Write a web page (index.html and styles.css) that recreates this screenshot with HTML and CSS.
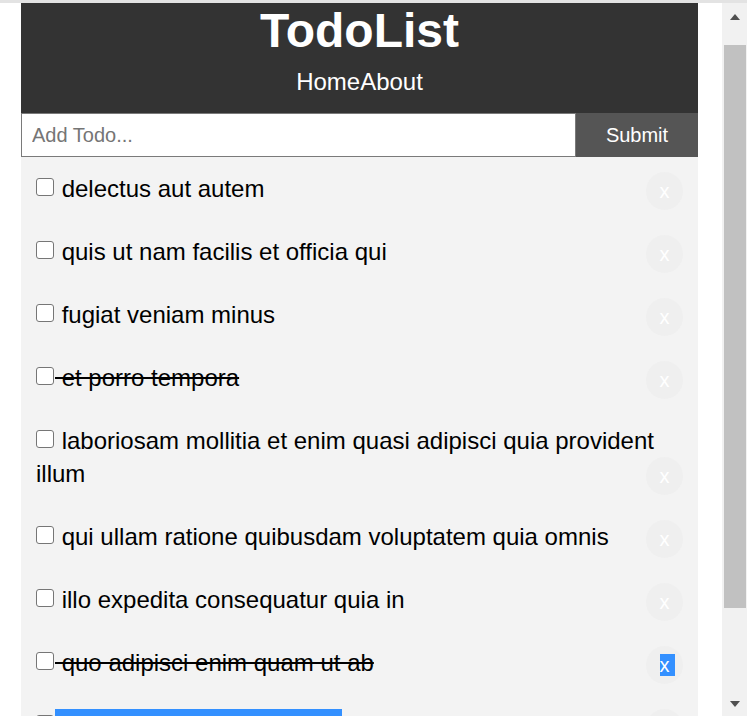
FILE: index.html
```html
<!DOCTYPE html>
<html lang="en">
<head>
<meta charset="utf-8">
<title>TodoList</title>
<link rel="stylesheet" href="styles.css">
</head>
<body>
<div class="topbar"></div>
<div class="window">
  <div class="page">
    <div class="container">
      <header class="header">
        <h1 class="title">TodoList</h1>
        <nav class="nav"><a href="#" class="nav-link">Home</a><a href="#" class="nav-link">About</a></nav>
      </header>
      <form class="add-form">
        <input class="add-input" type="text" name="title" placeholder="Add Todo...">
        <input class="add-submit" type="submit" value="Submit">
      </form>
      <div class="todo"><p class="todo-text"><input type="checkbox" class="check"> delectus aut autem<button class="del" type="button">x</button></p></div>
      <div class="todo"><p class="todo-text"><input type="checkbox" class="check"> quis ut nam facilis et officia qui<button class="del" type="button">x</button></p></div>
      <div class="todo"><p class="todo-text"><input type="checkbox" class="check"> fugiat veniam minus<button class="del" type="button">x</button></p></div>
      <div class="todo"><p class="todo-text done"><input type="checkbox" class="check"> et porro tempora<button class="del" type="button">x</button></p></div>
      <div class="todo"><p class="todo-text"><input type="checkbox" class="check"> laboriosam mollitia et enim quasi adipisci quia provident illum<button class="del" type="button">x</button></p></div>
      <div class="todo"><p class="todo-text"><input type="checkbox" class="check"> qui ullam ratione quibusdam voluptatem quia omnis<button class="del" type="button">x</button></p></div>
      <div class="todo"><p class="todo-text"><input type="checkbox" class="check"> illo expedita consequatur quia in<button class="del" type="button">x</button></p></div>
      <div class="todo"><p class="todo-text done"><input type="checkbox" class="check"> quo adipisci enim quam ut ab<button class="del" type="button"><span class="sel sel-x">x</span></button></p></div>
      <div class="todo"><p class="todo-text"><input type="checkbox" class="check"><span class="sel sel-line"> molestiae perspiciatis ipsa</span><button class="del" type="button">x</button></p></div>
      <div class="todo"><p class="todo-text done"><input type="checkbox" class="check"> illo est ratione doloremque quia maiores aut<button class="del" type="button">x</button></p></div>
    </div>
  </div>
  <div class="scrollbar">
    <div class="sb-btn sb-up"><span class="arrow-up"></span></div>
    <div class="sb-track"><div class="sb-thumb"></div></div>
    <div class="sb-btn sb-down"><span class="arrow-down"></span></div>
  </div>
</div>
</body>
</html>
```
FILE: styles.css
```css
html, body {
  margin: 0;
  padding: 0;
  width: 747px;
  height: 716px;
  overflow: hidden;
  background: #fff;
  font-family: "Liberation Sans", Arial, sans-serif;
}

.topbar {
  height: 3px;
  background: #e3e3e3;
}

.window {
  display: flex;
  height: 713px;
}

.page {
  width: 722px;
  flex: none;
  overflow: hidden;
  background: #fff;
}

.container {
  margin-left: 21px;
  width: 677px;
}

.header {
  background: #333;
  color: #fff;
  text-align: center;
  padding: 0 0 15px;
}

.title {
  margin: 0;
  font-size: 48px;
  line-height: 56px;
  font-weight: bold;
}

.nav {
  margin-top: 6px;
  font-size: 24px;
  line-height: 33px;
}

.nav-link {
  color: #fff;
  text-decoration: none;
}

.add-form {
  display: flex;
  height: 44px;
  margin: 0;
}

.add-input {
  box-sizing: border-box;
  width: 555px;
  height: 44px;
  margin: 0;
  border: 1px solid #7a7a7a;
  padding: 0 10px;
  font-family: "Liberation Sans", Arial, sans-serif;
  font-size: 20px;
  color: #000;
  background: #fff;
  outline: none;
}

.add-input::placeholder {
  color: #757575;
}

.add-submit {
  box-sizing: border-box;
  width: 122px;
  height: 44px;
  margin: 0;
  border: none;
  background: #555;
  color: #fff;
  font-family: "Liberation Sans", Arial, sans-serif;
  font-size: 20px;
  padding: 0;
}

.todo {
  background: #f3f3f3;
  padding: 15px;
}

.todo-text {
  margin: 0;
  font-size: 24px;
  line-height: 33px;
  color: #000;
}

.done {
  text-decoration: line-through;
}

.check {
  -webkit-appearance: none;
  appearance: none;
  box-sizing: border-box;
  width: 18px;
  height: 18px;
  margin: 6px 1px 0 0;
  vertical-align: top;
  border: 1px solid #767676;
  border-radius: 3px;
  background: #fff;
}

.del {
  float: right;
  width: 37px;
  height: 38px;
  padding: 0;
  border: none;
  border-radius: 50%;
  background: #efefef;
  color: #fff;
  font-family: "Liberation Sans", Arial, sans-serif;
  font-size: 20px;
  line-height: 22px;
  text-align: center;
}

.sel {
  background: #3390ff;
  color: #fff;
}

.sel-x {
  padding-right: 5px;
  margin-right: -5px;
}

.sel-line {
  padding: 3px 0;
}

.scrollbar {
  width: 25px;
  flex: none;
  display: flex;
  flex-direction: column;
  background: #f1f1f1;
}

.sb-btn {
  display: flex;
  align-items: center;
  justify-content: center;
}

.sb-up {
  height: 28px;
}

.sb-down {
  height: 24px;
}

.arrow-up {
  width: 0;
  height: 0;
  border-left: 5.5px solid transparent;
  border-right: 5.5px solid transparent;
  border-bottom: 6px solid #505050;
}

.arrow-down {
  width: 0;
  height: 0;
  border-left: 5.5px solid transparent;
  border-right: 5.5px solid transparent;
  border-top: 6px solid #505050;
}

.sb-track {
  flex: 1;
}

.sb-thumb {
  margin: 14px 1px 0 2px;
  height: 563px;
  background: #c1c1c1;
}
```
